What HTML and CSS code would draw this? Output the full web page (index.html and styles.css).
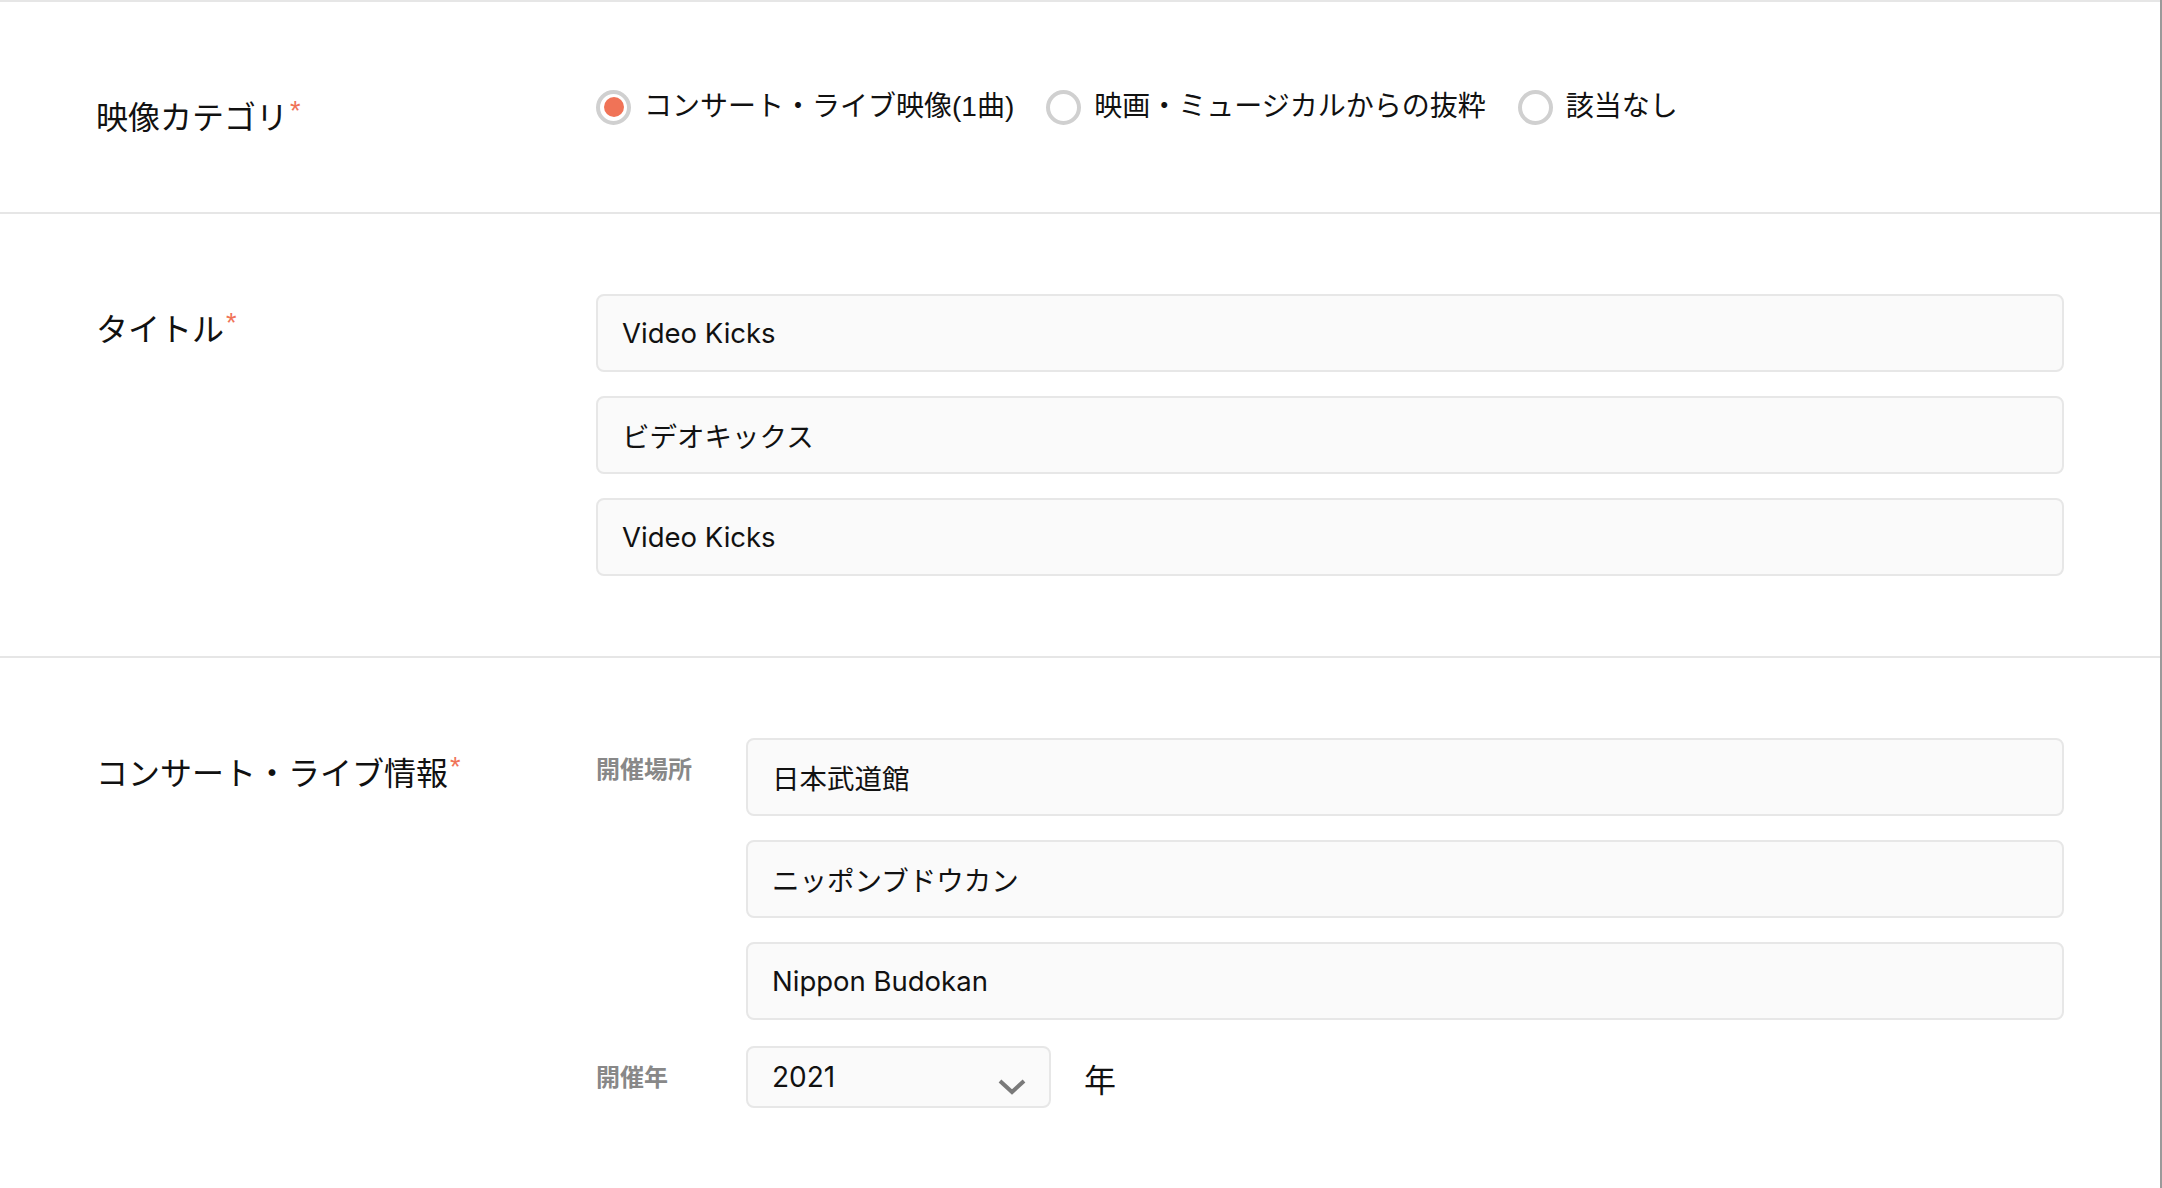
FILE: index.html
```html
<!DOCTYPE html>
<html lang="ja">
<head>
  <meta charset="UTF-8">
  <title>映像情報の登録</title>
  <link rel="stylesheet" href="styles.css">
</head>
<body>

<div class="page">
  <section class="row">
    <div class="row-label category-label">映像カテゴリ<span class="req">*</span></div>
    <div class="row-body">
      <div class="radios">
        <label class="radio">
          <input type="radio" name="category" checked>
          <span class="mark"></span>
          コンサート・ライブ映像(1曲)
        </label>
        <label class="radio">
          <input type="radio" name="category">
          <span class="mark"></span>
          映画・ミュージカルからの抜粋
        </label>
        <label class="radio">
          <input type="radio" name="category">
          <span class="mark"></span>
          該当なし
        </label>
      </div>
    </div>
  </section>

  <section class="row">
    <div class="row-label">タイトル<span class="req">*</span></div>
    <div class="row-body field-stack">
      <input class="text-input" type="text" value="Video Kicks">
      <input class="text-input" type="text" value="ビデオキックス">
      <input class="text-input" type="text" value="Video Kicks">
    </div>
  </section>

  <section class="row">
    <div class="row-label">コンサート・ライブ情報<span class="req">*</span></div>
    <div class="row-body">
      <div class="sub-row">
        <div class="sub-label">開催場所</div>
        <div class="field-stack">
          <input class="text-input" type="text" value="日本武道館">
          <input class="text-input" type="text" value="ニッポンブドウカン">
          <input class="text-input" type="text" value="Nippon Budokan">
        </div>
      </div>
      <div class="sub-row year-row">
        <div class="sub-label">開催年</div>
        <div class="year-field">
          <div class="select-box">
            <select>
              <option>2021</option>
              <option>2020</option>
              <option>2019</option>
            </select>
            <svg class="chevron" width="28" height="16" viewBox="0 0 28 16">
              <path d="M2 2 L14 13 L26 2" fill="none" stroke="#7a7a7a" stroke-width="4"/>
            </svg>
          </div>
          <span class="unit">年</span>
        </div>
      </div>
    </div>
  </section>
</div>

</body>
</html>
```

FILE: styles.css
```css
body {
  margin: 0;
  padding: 0;
  background-color: #ffffff;
  font-family: 'Liberation Sans', 'Noto Sans CJK JP', sans-serif;
  color: #111;
}
.page {
  width: 2160px;
  min-height: 100vh;
  border-right: 2px solid #9a9a9a;
}
.row {
  display: grid;
  grid-template-columns: 500px 1fr;
  align-items: start;
  padding: 80px 96px;
  border-top: 2px solid #e6e6e6;
}
.row-label {
  font-size: 32px;
  line-height: 58px;
  white-space: nowrap;
}
.category-label {
  height: 50px;
  line-height: 59px;
}
.req {
  color: #f07357;
  font-size: 27px;
  margin-left: 2px;
  vertical-align: 9px;
}
.radios {
  display: flex;
  align-items: center;
  height: 50px;
}
.radio {
  display: flex;
  align-items: center;
  gap: 13px;
  margin-right: 32px;
  font-size: 28px;
  line-height: 50px;
  cursor: pointer;
}
.radio input {
  display: none;
}
.radio .mark {
  width: 35px;
  height: 35px;
  box-sizing: border-box;
  border: 4px solid #d0d0d0;
  border-radius: 50%;
  background: #fff;
  display: flex;
  align-items: center;
  justify-content: center;
}
.radio input:checked + .mark::after {
  content: "";
  width: 20px;
  height: 20px;
  border-radius: 50%;
  background-color: #f07357;
}
.field-stack {
  display: flex;
  flex-direction: column;
  gap: 24px;
}
.text-input {
  height: 78px;
  box-sizing: border-box;
  padding: 0 24px;
  border: 2px solid #e7e7e7;
  border-radius: 8px;
  background-color: #fafafa;
  font-family: Inter, 'Noto Sans CJK JP', sans-serif;
  font-size: 27.5px;
  color: #111;
  outline: none;
}
.sub-row {
  display: grid;
  grid-template-columns: 150px 1fr;
  align-items: start;
}
.sub-label {
  font-size: 24px;
  font-weight: bold;
  line-height: 64px;
  color: #888;
}
.year-row {
  margin-top: 26px;
}
.year-field {
  display: flex;
  align-items: center;
}
.select-box {
  position: relative;
  width: 305px;
  height: 62px;
}
.select-box select {
  appearance: none;
  -webkit-appearance: none;
  width: 100%;
  height: 100%;
  box-sizing: border-box;
  padding: 0 60px 0 24px;
  border: 2px solid #e7e7e7;
  border-radius: 8px;
  background-color: #fafafa;
  font-family: Inter, 'Noto Sans CJK JP', sans-serif;
  font-size: 28px;
  color: #111;
  outline: none;
}
.chevron {
  position: absolute;
  right: 25px;
  top: 33px;
  pointer-events: none;
}
.unit {
  margin-left: 33px;
  font-size: 32px;
  padding-top: 1px;
}
```
